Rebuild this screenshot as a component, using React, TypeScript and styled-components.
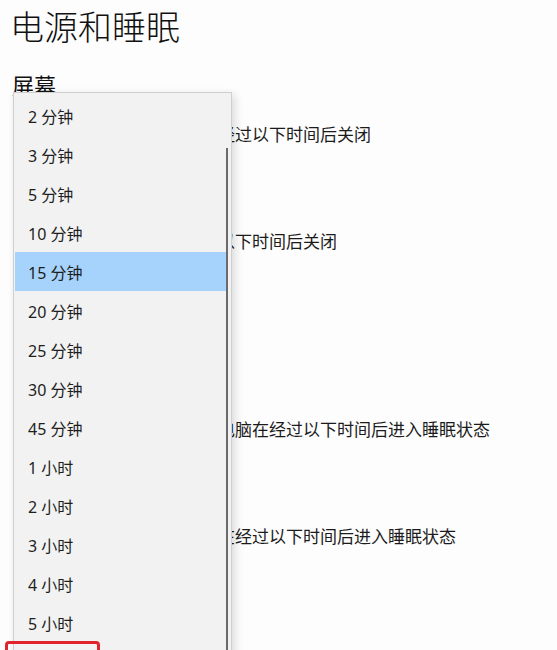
import React from "react";
import styled, { createGlobalStyle } from "styled-components";

const GlobalStyle = createGlobalStyle`
  html, body {
    margin: 0;
    padding: 0;
    height: 100%;
    overflow: hidden;
    background: #fdfdfd;
  }
  body {
    font-family: "Noto Sans", "Noto Sans CJK SC", sans-serif;
    color: #1b1b1b;
  }
`;

const screenOptions = [
  "在使用电池电源的情况下，经过以下时间后关闭",
  "在接通电源的情况下，经过以下时间后关闭",
];

const sleepOptions = [
  "在使用电池电源的情况下，电脑在经过以下时间后进入睡眠状态",
  "在接通电源的情况下，电脑在经过以下时间后进入睡眠状态",
];

const durations = [
  "2 分钟",
  "3 分钟",
  "5 分钟",
  "10 分钟",
  "15 分钟",
  "20 分钟",
  "25 分钟",
  "30 分钟",
  "45 分钟",
  "1 小时",
  "2 小时",
  "3 小时",
  "4 小时",
  "5 小时",
  "从不",
];

const selected = "15 分钟";

/** Power & sleep settings page with the timeout dropdown opened. */
export default function App() {
  return (
    <>
      <GlobalStyle />
      <Page>
        <Title>电源和睡眠</Title>

        <SectionTitle>屏幕</SectionTitle>
        {screenOptions.map((label) => (
          <Setting key={label}>
            <Label>{label}</Label>
            <Combo>15 分钟</Combo>
          </Setting>
        ))}

        <SectionTitle $gap={77}>睡眠</SectionTitle>
        {sleepOptions.map((label) => (
          <Setting key={label}>
            <Label>{label}</Label>
            <Combo>30 分钟</Combo>
          </Setting>
        ))}

        <Dropdown>
          {durations.map((d) => (
            <Option key={d} $active={d === selected}>
              {d}
            </Option>
          ))}
          <ScrollThumb />
        </Dropdown>

        <Marker />
      </Page>
    </>
  );
}

const Page = styled.div`
  position: relative;
  height: 650px;
  padding: 0 14px;
  overflow: hidden;
`;

const Title = styled.h1`
  margin: 9px 0 0 -4px;
  font-family: "Noto Sans CJK SC", sans-serif;
  font-size: 34px;
  line-height: 34px;
  font-weight: 300;
  color: #111;
`;

const SectionTitle = styled.h2<{ $gap?: number }>`
  margin: ${(p) => p.$gap ?? 30}px 0 0 -2px;
  font-family: "Noto Sans CJK SC", sans-serif;
  font-size: 22px;
  line-height: 22px;
  font-weight: 400;
  color: #111;
`;

const Setting = styled.div`
  display: flex;
  flex-direction: column;
  align-items: flex-start;
  gap: 10px;
  margin-top: 30px;

  & + & {
    margin-top: 48px;
  }
`;

const Label = styled.div`
  font-family: "Noto Sans CJK SC", sans-serif;
  font-size: 17px;
  line-height: 17px;
  white-space: nowrap;
`;

const Combo = styled.div`
  box-sizing: border-box;
  width: 200px;
  height: 32px;
  padding: 0 10px;
  display: flex;
  align-items: center;
  border: 2px solid #999;
  font-size: 15px;
`;

const Dropdown = styled.div`
  position: absolute;
  left: 13px;
  top: 92px;
  width: 219px;
  height: 620px;
  box-sizing: border-box;
  padding: 3px 4px 0 0;
  background: #f2f2f2;
  border: 1px solid #cfcfcf;
  box-shadow: 3px 3px 9px rgba(0, 0, 0, 0.14);
  display: flex;
  flex-direction: column;
`;

const Option = styled.div<{ $active?: boolean }>`
  height: 39px;
  flex: 0 0 39px;
  display: flex;
  align-items: center;
  padding-left: 13px;
  margin-left: 1px;
  font-family: "Noto Sans", "Noto Sans CJK SC", sans-serif;
  font-size: 16px;
  color: #1e1e1e;
  background: ${(p) => (p.$active ? "#a6d3fb" : "transparent")};
`;

const ScrollThumb = styled.div`
  position: absolute;
  right: 3px;
  top: 55px;
  width: 2px;
  height: 600px;
  background: #6b6b6b;
`;

const Marker = styled.div`
  position: absolute;
  left: 5px;
  top: 641px;
  width: 95px;
  height: 42px;
  box-sizing: border-box;
  border: 3px solid #e0242c;
  border-radius: 4px;
`;
